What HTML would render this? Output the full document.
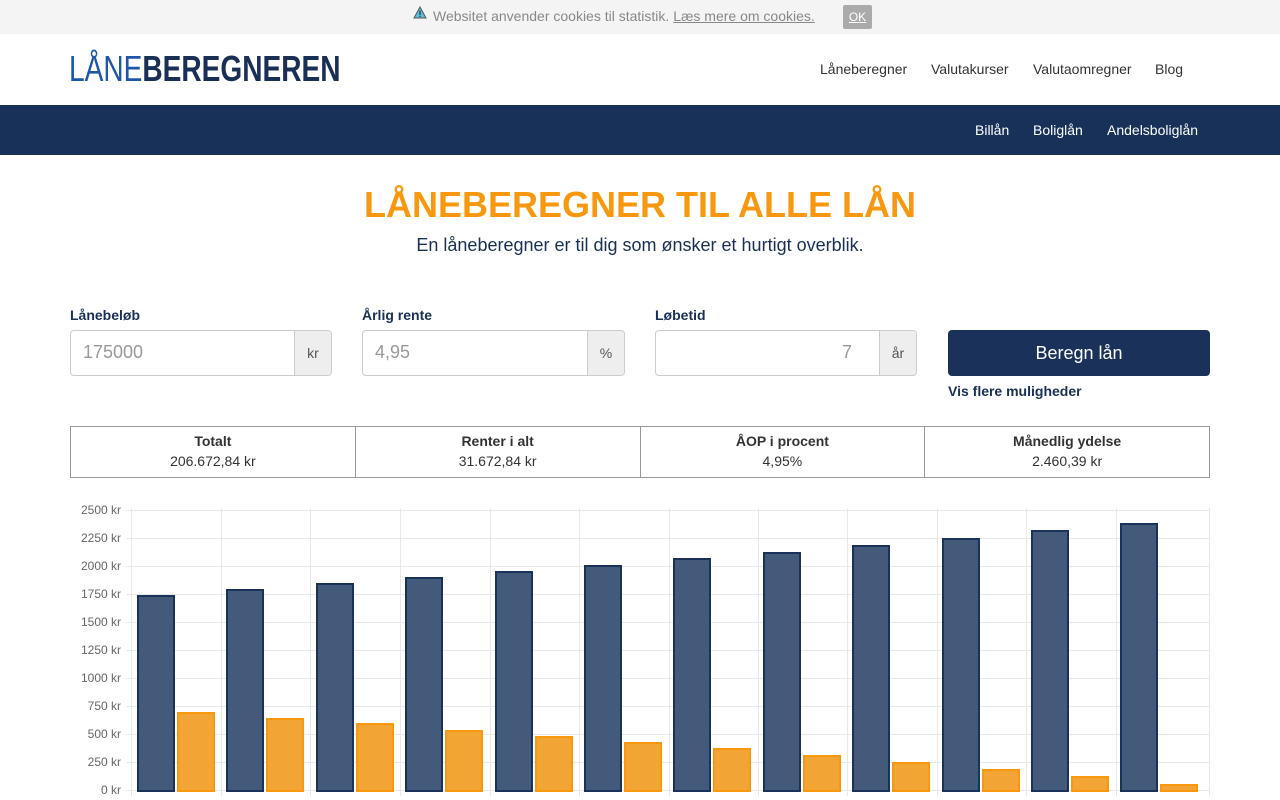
<!DOCTYPE html>
<html><head><meta charset="utf-8"><style>
*{box-sizing:border-box;margin:0;padding:0}
body{width:1280px;height:800px;overflow:hidden;background:#fff;font-family:"Liberation Sans",sans-serif;position:relative}
.abs{position:absolute}
.cookie{left:0;top:0;width:1280px;height:34px;background:#f4f4f4;font-size:14px;color:#888}
.nav a{position:absolute;font-size:14px;color:#333;text-decoration:none}
.bar{left:0;top:105px;width:1280px;height:50px;background:#173158}
.bar span{position:absolute;top:17px;color:#fff;font-size:14px}
.lbl{font-size:14px;font-weight:bold;color:#1a2f55}
.inp{height:46px;border:1px solid #ccc;border-radius:4px;background:#fff;font-size:18px;color:#999;overflow:hidden}
.inp .add{position:absolute;right:0;top:0;width:37px;height:44px;background:#eee;border-left:1px solid #ccc;font-size:14px;color:#555;text-align:center;line-height:44px}
.tbl{left:70px;top:426px;width:1140px;height:52px;border:1px solid #999;display:flex}
.tbl div{flex:1;text-align:center;font-size:14px;color:#333;padding-top:4px;line-height:20px;border-left:1px solid #999}
.tbl div:first-child{border-left:none}
</style></head><body>
<div class="abs cookie">
 <svg class="abs" style="left:413px;top:6px" width="14" height="13" viewBox="0 0 14 13"><path d="M7 1 L13 12 H1 Z" fill="#5bc0de" stroke="#555" stroke-width="1"/><rect x="6.4" y="4.5" width="1.2" height="4.5" fill="#333"/><rect x="6.4" y="9.8" width="1.2" height="1.2" fill="#333"/></svg>
 <span class="abs" style="left:433px;top:8px">Websitet anvender cookies til statistik. <u>Læs mere om cookies.</u></span>
 <span class="abs" style="left:843px;top:5px;width:29px;height:24px;background:#aaa;color:#fff;font-size:12px;text-align:center;line-height:24px;border-radius:2px"><u>OK</u></span>
</div>
<div class="abs" style="left:69px;top:49px;font-size:36px;font-weight:bold;line-height:40px;transform:scaleX(0.78);transform-origin:0 0;white-space:nowrap"><span style="color:#1f57a8;font-weight:normal">LÅNE</span><span style="color:#1a2f55">BEREGNEREN</span></div>
<div class="nav"><a style="left:820px;top:61px">Låneberegner</a><a style="left:931px;top:61px">Valutakurser</a><a style="left:1033px;top:61px">Valutaomregner</a><a style="left:1155px;top:61px">Blog</a></div>
<div class="abs bar"><span style="left:975px">Billån</span><span style="left:1033px">Boliglån</span><span style="left:1107px">Andelsboliglån</span></div>
<div class="abs" style="left:0;top:184px;width:1280px;text-align:center;font-size:36px;font-weight:bold;color:#f7980f">LÅNEBEREGNER TIL ALLE LÅN</div>
<div class="abs" style="left:0;top:235px;width:1280px;text-align:center;font-size:18px;color:#1a2f55">En låneberegner er til dig som ønsker et hurtigt overblik.</div>
<div class="abs lbl" style="left:70px;top:307px">Lånebeløb</div>
<div class="abs lbl" style="left:362px;top:307px">Årlig rente</div>
<div class="abs lbl" style="left:655px;top:307px">Løbetid</div>
<div class="abs inp" style="left:70px;top:330px;width:262px"><span class="abs" style="left:12px;top:11px">175000</span><div class="add">kr</div></div>
<div class="abs inp" style="left:362px;top:330px;width:263px"><span class="abs" style="left:12px;top:11px">4,95</span><div class="add">%</div></div>
<div class="abs inp" style="left:655px;top:330px;width:262px"><span class="abs" style="left:186px;top:11px">7</span><div class="add">år</div></div>
<div class="abs" style="left:948px;top:330px;width:262px;height:46px;background:#1a3159;border-radius:4px;color:#fff;font-size:18px;text-align:center;line-height:46px">Beregn lån</div>
<div class="abs lbl" style="left:948px;top:383px">Vis flere muligheder</div>
<div class="abs tbl"><div><b>Totalt</b><br>206.672,84 kr</div><div><b>Renter i alt</b><br>31.672,84 kr</div><div><b>ÅOP i procent</b><br>4,95%</div><div><b>Månedlig ydelse</b><br>2.460,39 kr</div></div>
<svg class="abs" style="left:0;top:490px" width="1280" height="310" font-family="Liberation Sans" font-size="12" fill="#666">
<g stroke="#e8e8e8" stroke-width="1">
<line x1="126" y1="20.5" x2="1210" y2="20.5"/><line x1="126" y1="48.5" x2="1210" y2="48.5"/><line x1="126" y1="76.5" x2="1210" y2="76.5"/><line x1="126" y1="104.5" x2="1210" y2="104.5"/><line x1="126" y1="132.5" x2="1210" y2="132.5"/><line x1="126" y1="160.5" x2="1210" y2="160.5"/><line x1="126" y1="188.5" x2="1210" y2="188.5"/><line x1="126" y1="216.5" x2="1210" y2="216.5"/><line x1="126" y1="244.5" x2="1210" y2="244.5"/><line x1="126" y1="272.5" x2="1210" y2="272.5"/><line x1="126" y1="300.5" x2="1210" y2="300.5"/>
<line x1="131.5" y1="18" x2="131.5" y2="306"/><line x1="221.5" y1="18" x2="221.5" y2="306"/><line x1="310.5" y1="18" x2="310.5" y2="306"/><line x1="400.5" y1="18" x2="400.5" y2="306"/><line x1="490.5" y1="18" x2="490.5" y2="306"/><line x1="579.5" y1="18" x2="579.5" y2="306"/><line x1="669.5" y1="18" x2="669.5" y2="306"/><line x1="758.5" y1="18" x2="758.5" y2="306"/><line x1="847.5" y1="18" x2="847.5" y2="306"/><line x1="937.5" y1="18" x2="937.5" y2="306"/><line x1="1026.5" y1="18" x2="1026.5" y2="306"/><line x1="1116.5" y1="18" x2="1116.5" y2="306"/><line x1="1209.5" y1="18" x2="1209.5" y2="306"/>
</g>
<g text-anchor="end">
<text x="121" y="24">2500 kr</text><text x="121" y="52">2250 kr</text><text x="121" y="80">2000 kr</text><text x="121" y="108">1750 kr</text><text x="121" y="136">1500 kr</text><text x="121" y="164">1250 kr</text><text x="121" y="192">1000 kr</text><text x="121" y="220">750 kr</text><text x="121" y="248">500 kr</text><text x="121" y="276">250 kr</text><text x="121" y="304">0 kr</text>
</g>
<g fill="#445a7a" stroke="#1a3159" stroke-width="2">
<rect x="138" y="106" width="36" height="195"/><rect x="227" y="100" width="36" height="201"/><rect x="317" y="94" width="36" height="207"/><rect x="406" y="88" width="36" height="213"/><rect x="496" y="82" width="36" height="219"/><rect x="585" y="76" width="36" height="225"/><rect x="674" y="69" width="36" height="232"/><rect x="764" y="63" width="36" height="238"/><rect x="853" y="56" width="36" height="245"/><rect x="943" y="49" width="36" height="252"/><rect x="1032" y="41" width="36" height="260"/><rect x="1121" y="34" width="36" height="267"/>
</g>
<g fill="#f2a534" stroke="#f7980f" stroke-width="2">
<rect x="178" y="223" width="36" height="78"/><rect x="267" y="229" width="36" height="72"/><rect x="357" y="234" width="36" height="67"/><rect x="446" y="241" width="36" height="60"/><rect x="536" y="247" width="36" height="54"/><rect x="625" y="253" width="36" height="48"/><rect x="714" y="259" width="36" height="42"/><rect x="804" y="266" width="36" height="35"/><rect x="893" y="273" width="36" height="28"/><rect x="983" y="280" width="36" height="21"/><rect x="1072" y="287" width="36" height="14"/><rect x="1161" y="295" width="36" height="6"/>
</g>
</svg>
</body></html>
